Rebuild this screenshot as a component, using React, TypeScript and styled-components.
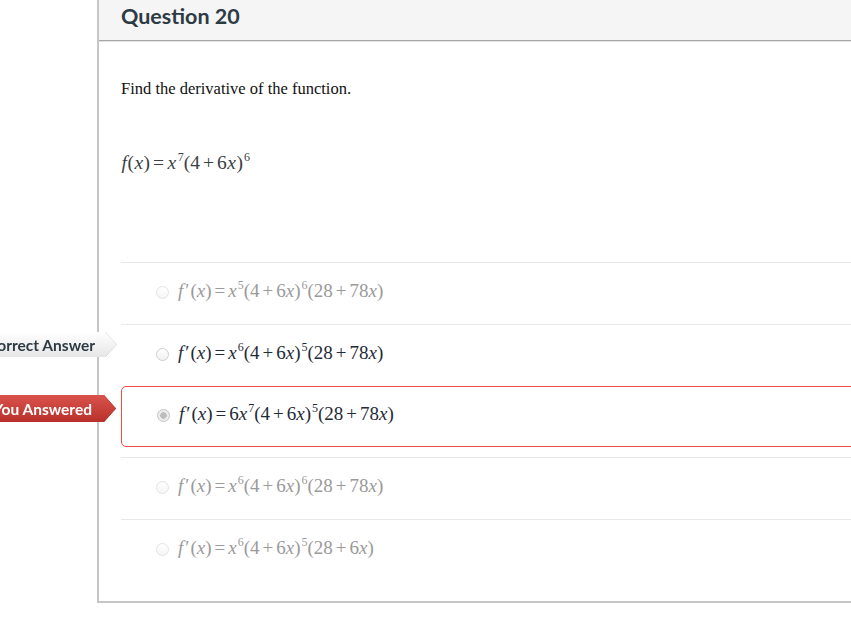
import styled, { createGlobalStyle, css } from "styled-components";

const GlobalStyle = createGlobalStyle`
  html, body {
    margin: 0;
    padding: 0;
    background: #fff;
    overflow: hidden;
  }
  body {
    font-family: Lato, "Liberation Sans", sans-serif;
  }
`;

type Answer = {
  coef?: string;
  xPow: string;
  innerPow: string;
  last: string;
  tag?: "correct" | "chosen";
  selected?: boolean;
};

const answers: Answer[] = [
  { xPow: "5", innerPow: "6", last: "78" },
  { xPow: "6", innerPow: "5", last: "78", tag: "correct" },
  { coef: "6", xPow: "7", innerPow: "5", last: "78", tag: "chosen", selected: true },
  { xPow: "6", innerPow: "6", last: "78" },
  { xPow: "6", innerPow: "5", last: "6" },
];

const Page = styled.div`
  padding-left: 97px;
  min-height: 623px;
`;

const Card = styled.section`
  width: 900px;
  border-left: 2px solid #c6c6c6;
  border-bottom: 2px solid #c6c6c6;
`;

const Header = styled.header`
  height: 40px;
  background: #f5f5f5;
  border-bottom: 1px solid #a6a6a6;
  box-shadow: 0 1px 0 #e2e2e2;
  padding-left: 22px;
  display: flex;
  align-items: center;
`;

const Title = styled.h2`
  margin: 0 0 9px;
  font-family: Lato, "Liberation Sans", sans-serif;
  font-weight: 700;
  font-size: 21.5px;
  color: #2d3b45;
`;

const Body = styled.div`
  padding: 38px 0 20px 22px;
`;

const Prompt = styled.p`
  margin: 0;
  font-family: "Liberation Serif", "Times New Roman", serif;
  font-size: 16.5px;
  line-height: 20px;
  color: #111;
`;

const V = styled.i`
  font-style: italic;
`;

const Formula = styled.div`
  margin-top: 52px;
  height: 24px;
  display: flex;
  align-items: center;

  ${V} {
    margin: 0 0.5px;
  }
`;

const AnswerList = styled.div`
  margin-top: 87px;
`;

const Row = styled.div<{ $selected?: boolean }>`
  position: relative;
  height: 62px;
  display: flex;
  align-items: center;
  padding-left: 35px;
  padding-bottom: 6px;
  box-sizing: border-box;
  border-top: 1px solid #e8e8e8;

  ${(p) =>
    p.$selected &&
    css`
      height: 61px;
      border: 1px solid #ee4b44;
      border-radius: 5px;
      margin-bottom: 10px;
    `}
`;

const Radio = styled.span<{ $checked?: boolean; $faded?: boolean }>`
  width: 13px;
  height: 13px;
  box-sizing: border-box;
  border-radius: 50%;
  border: 1px solid ${(p) => (p.$checked ? "#c4c4c4" : "#cfcfcf")};
  background: ${(p) =>
    p.$checked
      ? "radial-gradient(circle, #bdbdbd 0 3px, #ececec 3.5px)"
      : "linear-gradient(#ffffff, #f1f1f1)"};
  opacity: ${(p) => (p.$faded ? 0.6 : 1)};
  margin: 3px 9px 0 0;
  flex-shrink: 0;
`;

const MathText = styled.span<{ $tone: "dark" | "faded" | "plain"; $size: number }>`
  font-family: "Liberation Serif", "Times New Roman", serif;
  font-size: ${(p) => p.$size}px;
  line-height: 24px;
  white-space: nowrap;
  color: ${(p) =>
    p.$tone === "faded" ? "#9a9a9a" : p.$tone === "dark" ? "#1f2b38" : "#3a3f45"};
`;

const Op = styled.span`
  margin: 0 3px;
`;

const Prime = styled.span`
  margin: 0 1px 0 2px;
`;

const Pow = styled.sup`
  font-size: 12px;
  line-height: 0;
  vertical-align: 8px;
  margin-left: 1px;
`;

const Tag = styled.span<{ $kind: "correct" | "chosen" }>`
  position: absolute;
  top: ${(p) => (p.$kind === "chosen" ? 8 : 7)}px;
  right: calc(100% + ${(p) => (p.$kind === "chosen" ? 6 : 4)}px);
  filter: drop-shadow(0 0 0.6px ${(p) => (p.$kind === "chosen" ? "#8f1f1a" : "#9a9a9a")});
`;

const TagBody = styled.span<{ $kind: "correct" | "chosen" }>`
  display: flex;
  align-items: center;
  height: ${(p) => (p.$kind === "chosen" ? 27 : 25)}px;
  padding: 0 ${(p) => (p.$kind === "chosen" ? 24 : 22)}px 0 14px;
  font-weight: 700;
  font-size: 15.5px;
  white-space: nowrap;
  clip-path: polygon(0 0, calc(100% - 12px) 0, 100% 50%, calc(100% - 12px) 100%, 0 100%);
  ${(p) =>
    p.$kind === "chosen"
      ? css`
          color: #fff;
          background: linear-gradient(#d9534c, #b8302a);
        `
      : css`
          color: #2d3b45;
          background: linear-gradient(#ffffff, #e6e6e6);
        `}
`;

function Expr({ coef, xPow, innerPow, last }: Answer) {
  return (
    <>
      <V>f</V>
      <Prime>′</Prime>(<V>x</V>)<Op>=</Op>
      {coef}
      <V>x</V>
      <Pow>{xPow}</Pow>(4<Op>+</Op>6<V>x</V>)<Pow>{innerPow}</Pow>(28<Op>+</Op>
      {last}
      <V>x</V>)
    </>
  );
}

function App() {
  return (
    <>
      <GlobalStyle />
      <Page>
        <Card>
          <Header>
            <Title>Question 20</Title>
          </Header>
          <Body>
            <Prompt>Find the derivative of the function.</Prompt>
            <Formula>
              <MathText $tone="plain" $size={19.5}>
                <V>f</V>(<V>x</V>)<Op>=</Op>
                <V>x</V>
                <Pow>7</Pow>(4<Op>+</Op>6<V>x</V>)<Pow>6</Pow>
              </MathText>
            </Formula>
            <AnswerList>
              {answers.map((a, i) => {
                const faded = !a.tag;
                return (
                  <Row key={i} $selected={a.selected}>
                    {a.tag && (
                      <Tag $kind={a.tag}>
                        <TagBody $kind={a.tag}>
                          {a.tag === "correct" ? "Correct Answer" : "You Answered"}
                        </TagBody>
                      </Tag>
                    )}
                    <Radio $checked={a.selected} $faded={faded} />
                    <MathText $tone={faded ? "faded" : "dark"} $size={19}>
                      <Expr {...a} />
                    </MathText>
                  </Row>
                );
              })}
            </AnswerList>
          </Body>
        </Card>
      </Page>
    </>
  );
}

export default App;
